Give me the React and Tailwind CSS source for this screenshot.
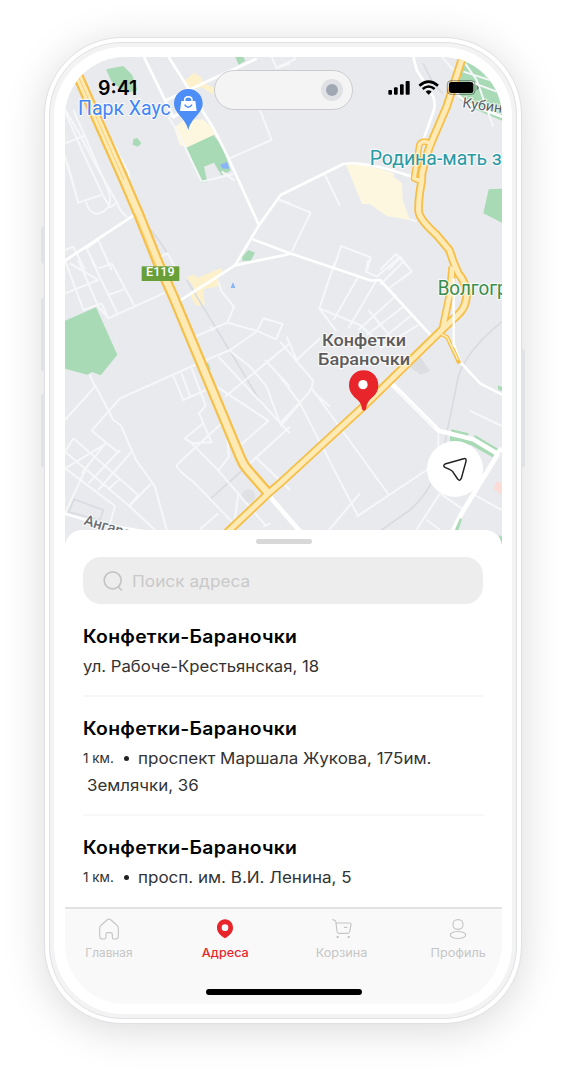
import React from "react";

const highwayA = "M190 130 L235 230 L372 540 L415 640 L475 790 L520 890 L620 1130 L722 1375 Q730 1395 742 1408 L805 1480";
const highwayB =
  "M670 1608 L805 1480 L840 1450 L1090 1220 L1320 995 L1378 940 Q1398 920 1400 885 Q1400 850 1375 820 L1360 785 L1348 750 L1310 705 Q1260 660 1256 635 Q1254 600 1265 545 L1266 520 Q1280 460 1295 425 L1340 320 L1398 140";
const branchLeft = "M1328 985 L1350 880 L1357 800";
const loop = "M1290 430 Q1265 418 1258 435 L1242 535 L1265 545";

function Label({ x, y, size, length, fill, children, ...rest }) {
  return (
    <text
      x={x}
      y={y}
      fontSize={size}
      textLength={length}
      lengthAdjust="spacingAndGlyphs"
      fill={fill}
      stroke="#fff"
      strokeOpacity="0.7"
      strokeWidth="7"
      strokeLinejoin="round"
      paintOrder="stroke"
      {...rest}
    >
      {children}
    </text>
  );
}

function CityMap() {
  return (
    <svg viewBox="195 171 1311 1470" className="block h-[490px] w-[437px] shrink-0" fontFamily="Roboto, sans-serif">
      <rect x="195" y="171" width="1311" height="1470" fill="#e8eaed" />

      {/* parks and built-up areas */}
      <g fill="#a8dab5">
        <path d="M318 208 L370 198 L396 224 L412 270 L380 280 L335 245 Z" />
        <path d="M706 171 L730 171 L736 182 L716 194 Z" />
        <path d="M400 418 L412 414 L424 430 L414 440 L398 434 Z" />
        <path d="M560 442 L574 434 L572 408 L588 406 L592 424 L640 404 L668 440 L692 512 L664 526 L642 488 L612 500 L622 546 L604 548 Z" />
        <path d="M727 770 L745 750 L765 758 L752 782 L727 782 Z" />
        <path d="M195 962 L288 922 L352 1064 L302 1126 L276 1116 L262 1124 L195 1106 Z" />
        <path d="M614 1092 L624 1088 L632 1108 L622 1114 Z" />
        <path d="M1392 171 L1506 171 L1506 362 L1430 330 L1380 300 L1370 240 Z" />
        <path d="M1466 568 L1506 566 L1506 668 L1450 640 Z" />
        <path d="M1354 1288 L1406 1300 L1402 1312 L1354 1300 Z" />
        <path d="M1350 1308 L1420 1318 L1484 1360 L1478 1372 L1414 1336 L1350 1324 Z" />
        <path d="M1424 1304 L1494 1346 L1488 1358 L1420 1322 Z" />
        <path d="M1494 1156 L1506 1162 L1506 1174 L1494 1168 Z" />
      </g>
      <g fill="#fef7e0">
        <path d="M1038 494 L1080 490 L1182 520 L1180 530 L1206 550 L1208 600 L1230 660 L1160 648 L1110 612 L1086 612 Z" />
        <path d="M522 384 L552 360 L610 358 L652 400 L562 442 L540 436 Z" />
      </g>
      <g fill="#fdf1cc">
        <path d="M552 244 L582 218 L604 232 L610 250 L640 262 L640 284 L606 262 L560 270 Z" />
        <path d="M560 830 L584 824 L592 834 L664 804 L668 816 L654 832 L658 858 L640 862 L610 868 L614 914 L588 918 L572 888 L582 864 Z" />
      </g>
      <path d="M660 494 L682 486 L688 506 L668 506 Z" fill="#8ab4f8" />
      <path d="M699 846 L706 864 L692 864 Z" fill="#8ab4f8" />
      <path d="M1490 1444 L1506 1448 L1506 1486 L1480 1466 Z" fill="#fbdcd9" />
      <path d="M1230 1102 L1260 1070 L1290 1112 L1262 1124 Z" fill="#dcdee2" />
      <circle cx="745" cy="1488" r="20" fill="#dfe1e5" />

      {/* rail lines */}
      <g fill="none" stroke="#d9dbe0" strokeWidth="5">
        <path d="M420 650 Q480 720 508 770 M560 840 L700 1070 L790 1220" />
        <path d="M1506 965 Q1400 1050 1375 1130 Q1350 1250 1340 1300 Q1320 1450 1230 1530 L1130 1600" />
        <path d="M630 1498 L730 1408" />
        <path d="M222 1498 L310 1530 L300 1560 L206 1536 Z" />
        <path d="M1270 190 Q1300 260 1330 280" />
      </g>

      {/* minor streets */}
      <g fill="none" stroke="#f6f7f9" strokeWidth="6" strokeLinejoin="round">
        <g transform="translate(90 60)">
          <path d="M105 120 L180 240 L265 400 L298 462 L296 480" />
          <path d="M105 268 L150 345 L200 440 L262 550 Q270 575 292 592" />
          <path d="M105 410 L145 548 L218 524 L160 400 L105 275 M130 270 L235 510 Q255 570 200 582 Q175 578 168 545 M105 370 L168 345 M112 430 L145 548 M218 524 L240 562 L264 546" />
          <path d="M105 690 L130 680 L165 750 M165 690 L205 660 L245 750 M172 690 L200 745 M380 715 L412 700 L440 750" />
          <path d="M515 485 L610 462 M515 485 L440 330 L415 290 M420 290 L470 272 M598 415 L725 360 L690 270 M725 110 L740 145 L780 130" />
          <path d="M745 540 L780 550 M575 455 L615 482" />
        </g>
        <g transform="translate(840 60)">
          <path d="M-5 140 L45 118 L40 105 M0 540 L92 578 L35 695 M135 465 L180 557 M160 750 L183 678 L272 712 L262 750 M300 750 L348 702 L392 750 M325 750 L360 715 M390 598 L410 604 M370 465 L400 470" />
          <path d="M485 110 L520 150 M555 130 L590 180 L640 320 M550 155 L660 190 M570 185 L650 215 M600 120 L620 170" />
        </g>
        <g transform="translate(90 780)">
          <path d="M105 100 L205 60 L120 10 M105 0 L160 150 L215 130 M145 0 L205 140 L235 175 L405 98 M185 0 L262 160 M245 10 L312 135 M205 25 L245 12 M235 105 L282 88 M215 130 L235 175" />
          <path d="M105 480 L195 380 L180 345 M195 375 L250 480 L272 495 L318 600 L375 680 L410 810" />
          <path d="M185 512 L270 415 L528 300 L600 270 L680 215 L700 175 L758 192 L738 238 L680 212 L592 188 L495 230 M592 188 L612 140 L575 95 L565 65 M552 212 L540 200" />
          <path d="M430 348 L460 420 L540 385 M455 340 L480 410 M485 325 L527 437 L507 460 L545 547 L487 550 L465 535 L520 490 M575 490 L440 615 Q440 630 490 665 L620 800" />
          <path d="M185 512 L268 580 M130 535 L325 705 L298 738 L105 575 L130 535 M105 625 L230 550 M155 640 L226 550 M175 670 L270 570 M205 690 L305 575 M238 685 L272 655 M105 625 L255 738 L235 810 M165 632 L105 760 M298 738 L375 810 M298 738 L362 672" />
          <path d="M485 550 L565 632 L710 800 M565 632 L597 590 L592 535 M565 290 L780 520 M560 380 L715 482 L632 555 M600 272 L660 320 L710 380 L750 490 L780 460 M585 410 L780 250 M705 300 L780 380 M675 590 L780 690 M635 632 L780 500 M625 700 L612 800 M510 808 L565 760 M700 800 L720 790" />
        </g>
        <g transform="translate(840 780)">
          <path d="M165 5 L118 145 L170 215 M118 145 L240 195 L300 250 M160 180 L235 50 M205 205 L290 60 M235 210 L350 105 M265 150 L340 240 M260 225 L370 140 M290 250 L395 165 M300 265 L415 195 M265 0 L258 35 L290 50 L360 -10 L395 35 L320 90 M300 75 L370 5" />
          <path d="M0 245 L98 360 Q100 385 80 405 L0 490 M50 300 L120 235 M0 350 L60 430 M0 500 L60 430 L235 770 M95 385 L327 705 M20 230 L50 300 M100 395 L150 440" />
          <path d="M130 830 L240 700 M230 770 L440 630 L475 570 L475 520 M570 452 L665 498 M410 808 L480 700 L545 745 M440 780 L480 810 M575 700 L665 750" />
        </g>
      </g>

      {/* main streets */}
      <g fill="none" stroke="#fff" strokeWidth="8" strokeLinejoin="round">
        <path d="M432 171 L520 352 L540 340 M506 171 L640 384 L688 480 L777 676 M500 300 L770 176" />
        <path d="M195 782 L410 640 M777 676 L705 796 L535 905 M777 676 L842 585 L1030 492 Q1090 480 1242 532 M758 718 L870 760 L1115 842 L1140 840 L1296 1010 M705 796 L870 762" />
        <path d="M1240 171 L1250 210 L1300 290 Q1310 320 1295 350 L1270 420" />
        <path d="M1362 1035 L1380 1085 L1440 1150 L1506 1184" />
        <path d="M195 1541 L290 1570 L470 1600" />
        <path d="M1370 280 L1400 310 L1506 350" />
      </g>
      <path d="M1170 1146 L1316 1292 L1420 1318 L1490 1360 L1506 1345" fill="none" stroke="#fff" strokeWidth="14" />
      <path d="M1494 1362 L1385 1540 L1350 1610 M805 1485 L905 1600" fill="none" stroke="#fff" strokeWidth="14" />
      <path d="M1188 1168 L1305 1284" fill="none" stroke="#e8eaed" strokeWidth="2" />
      <g fill="#a8dab5">
        <path d="M1380 1554 L1386 1558 L1372 1600 L1360 1600 Z" />
        <path d="M1497 1605 L1506 1610 L1506 1641 L1500 1630 Z" />
      </g>

      {/* highways */}
      <g fill="none" strokeLinejoin="round">
        <g stroke="#f6bf4a">
          <path d="M1324 1002 L1342 1012 L1378 1090" strokeWidth="12" />
          <path d={highwayA} strokeWidth="33" />
          <path d={highwayB} strokeWidth="26" />
          <path d={branchLeft} strokeWidth="24" />
          <path d={loop} strokeWidth="20" />
        </g>
        <g stroke="#feeab5">
          <path d="M1324 1002 L1342 1012 L1374 1080" strokeWidth="5" />
          <path d={highwayA} strokeWidth="20" />
          <path d={highwayB} strokeWidth="15" />
          <path d={branchLeft} strokeWidth="14" />
          <path d={loop} strokeWidth="11" />
        </g>
        <path d="M237 234 L372 540 M405 640 L470 800" stroke="#f9cf73" strokeWidth="3" />
        <path d="M1361 835 L1361 1040" stroke="#fff" strokeWidth="7" />
      </g>

      <rect x="425" y="799" width="113" height="44" fill="#689f38" />
      <text x="438" y="828" fontSize="37" fontWeight="500" textLength="86" lengthAdjust="spacingAndGlyphs" fill="#fff">E119</text>

      <Label x="234" y="345" size="59" length="278" fill="#4285f4">Парк Хаус</Label>
      <Label x="1109" y="496" size="60" length="396" fill="#2a9aa5">Родина-мать з</Label>
      <Label x="1313" y="885" size="58" length="210" fill="#388e4c">Волгогр</Label>
      <Label x="1386" y="322" size="43" fill="#5b6066" transform="rotate(8 1386 322)">Кубин</Label>
      <Label x="250" y="1573" size="44" fontWeight="500" fill="#6b6f75" transform="rotate(17 250 1573)">Ангарс</Label>
      <Label x="966" y="1037" size="49" length="252" fontWeight="500" fill="#5d5b5b">Конфетки</Label>
      <Label x="954" y="1094" size="49" length="276" fontWeight="500" fill="#5d5b5b">Бараночки</Label>

      {/* shopping place marker */}
      <path d="M565 267 C541 267 522 286 522 310 C522 342 556 352 565 390 C574 352 608 342 608 310 C608 286 589 267 565 267 Z" fill="#4c8df6" />
      <path d="M544 303 H586 L590 333 H540 Z" fill="#fff" />
      <path d="M554 304 V300 Q554 290 565 290 Q576 290 576 300 V304" fill="none" stroke="#fff" strokeWidth="4.5" />
      <path d="M554 314 Q565 330 576 314" fill="none" stroke="#4c8df6" strokeWidth="4.5" />

      {/* selected shop marker */}
      <path d="M1091 1111 C1066 1111 1047 1130 1047 1156 C1047 1176 1060 1190 1073 1200 Q1084 1209 1086 1228 Q1092 1236 1098 1228 Q1100 1209 1111 1198 C1124 1187 1135 1176 1135 1156 C1135 1130 1116 1111 1091 1111 Z" fill="#e7252a" />
      <circle cx="1089" cy="1154" r="14" fill="#fff" />
    </svg>
  );
}

function StatusBar() {
  return (
    <div className="absolute inset-x-0 top-[13px] flex h-10 items-start">
      <span className="ml-[33px] mt-[4px] w-[116px] font-['Inter',sans-serif] text-[19.5px] font-semibold leading-[29px] text-black">9:41</span>
      <div className="flex h-10 w-[139px] items-center justify-end rounded-full border border-[#cbcccf] bg-[#f4f4f4] pr-[9px]">
        <span className="flex size-[22px] items-center justify-center rounded-full bg-[#dfe1e5]">
          <span className="size-3 rounded-full bg-[#a0a8b4]" />
        </span>
      </div>
      <svg viewBox="325 180 275 46" className="ml-[35px] mt-[10px] h-[15.33px] w-[91.67px]">
        <rect x="326" y="210" width="11" height="14" rx="3" />
        <rect x="343" y="202" width="11" height="22" rx="3" />
        <rect x="361" y="193" width="11" height="31" rx="3" />
        <rect x="378" y="183" width="12" height="41" rx="3" />
        <path d="M419 197 Q447 173 475 197" fill="none" stroke="#000" strokeWidth="8" />
        <path d="M429 207 Q447 192 465 207" fill="none" stroke="#000" strokeWidth="7.5" />
        <path d="M438 215 Q447 207 456 215 L447 224 Z" />
        <rect x="503" y="182" width="83" height="41" rx="11" fill="none" stroke="#000" strokeOpacity=".4" strokeWidth="3" />
        <rect x="508" y="186" width="73" height="33" rx="7" />
        <path d="M591 195 Q598 200 598 203 Q598 206 591 211 Z" fillOpacity=".4" />
      </svg>
    </div>
  );
}

function Shop({ address, distance, last }) {
  return (
    <li className={last ? "pt-[18px]" : "border-b-2 border-[#f8f8f8] pb-[15px] pt-[18px]"}>
      <h2 className="origin-left scale-x-[1.075] whitespace-nowrap text-[18px] font-semibold leading-[27px] tracking-[0.25px] text-black">
        Конфетки-Бараночки
      </h2>
      <p className="mt-[3px] flex text-[16px] leading-[27px] text-[#333]">
        {distance && (
          <>
            <span className="w-[41px] text-[13.5px]">{distance}</span>
            <span className="mt-[11px] mr-[9px] size-[5px] shrink-0 rounded-full bg-[#222]" />
          </>
        )}
        <span className={"origin-left whitespace-nowrap " + (distance ? "scale-x-[1.062]" : "scale-x-[1.044]")}>{address[0]}</span>
      </p>
      {address[1] && (
        <p className="pl-[4px] text-[16px] leading-[27px] text-[#333]">
          <span className="inline-block origin-left scale-x-[1.055]">{address[1]}</span>
        </p>
      )}
    </li>
  );
}

function Tab({ label, active, children }) {
  return (
    <a className={"flex w-[70px] flex-col items-center text-[11.5px] leading-[16px] " + (active ? "font-medium text-[#e7252a]" : "text-[#c6c6c6]")}>
      <svg viewBox="0 0 72 72" className="size-6" fill="none" stroke="currentColor" strokeWidth="3.5" strokeLinecap="round" strokeLinejoin="round">
        {children}
      </svg>
      <span className={"mt-[4px] " + (label === "Главная" ? "scale-x-[1.03]" : "scale-x-110")}>{label}</span>
    </a>
  );
}

export default function App() {
  return (
    <div className="relative h-[1070px] w-[566px] overflow-hidden bg-white pl-[44px] pt-[37px] font-['Inter',sans-serif]">
      <i className="absolute left-[41px] top-[226px] h-[38px] w-[4px] rounded-l bg-[#e1e2e6]" />
      <i className="absolute left-[41px] top-[297px] h-[75px] w-[4px] rounded-l bg-[#e1e2e6]" />
      <i className="absolute left-[41px] top-[393px] h-[75px] w-[4px] rounded-l bg-[#e1e2e6]" />
      <i className="absolute left-[521px] top-[349px] h-[119px] w-[4px] rounded-r bg-[#e1e2e6]" />
      <div className="h-[987px] w-[478px] rounded-[78px] border border-[#e0e1e5] bg-white p-[4px] shadow-[0_6px_42px_rgba(0,0,0,0.15)]">
        <div className="h-full rounded-[73px] border border-[#e0e1e5] bg-[#f3f3f4] p-[4px]">
          <div className="flex h-full flex-col rounded-[69px] bg-white px-[11px] py-[10px]">
            <main className="relative flex h-[947px] w-[437px] shrink-0 flex-col overflow-hidden rounded-[60px] bg-white">
              <CityMap />
              <StatusBar />
              <button className="absolute left-[362px] top-[384px] flex size-14 items-center justify-center rounded-full bg-white">
                <svg viewBox="485 585 80 84" className="h-7 w-[26.67px]" fill="none" stroke="#222" strokeWidth="4.5" strokeLinejoin="round">
                  <path d="M494 612 L550 596 Q559 594 557 604 L543 655 Q539 665 532 657 L517 635 Q514 631 509 629 L494 622 Q487 617 494 612 Z" />
                </svg>
              </button>
              <section className="relative -mt-[17px] flex flex-1 flex-col rounded-t-[17px] bg-white px-[18px]">
                <div className="mx-auto mt-[9px] h-[5px] w-[56px] rounded-full bg-[#d8d8d8]" />
                <label className="mt-[13px] flex h-[47px] w-[400px] items-center rounded-[18px] bg-[#ededed] pl-[20px] pt-px">
                  <svg viewBox="0 0 60 60" className="size-5" fill="none" stroke="#c5c5c5" strokeWidth="5" strokeLinecap="round">
                    <circle cx="29" cy="28" r="25.5" />
                    <path d="M45 47 L55 57" />
                  </svg>
                  <span className="ml-[9px] origin-left scale-x-[1.045] text-[16.5px] text-[#c9c9c9]">Поиск адреса</span>
                </label>
                <ul className="w-[401px] pt-px">
                  <Shop address={["ул. Рабоче-Крестьянская, 18"]} />
                  <Shop distance="1 км." address={["проспект Маршала Жукова, 175им.", "Землячки, 36"]} />
                  <Shop distance="1 км." address={["просп. им. В.И. Ленина, 5"]} last />
                </ul>
              </section>
              <nav className="flex h-[97px] shrink-0 flex-col border-t-2 border-[#e2e2e2] bg-[#f9f9f9] pt-[8px]">
                <div className="flex justify-between px-[9px]">
                  <Tab label="Главная">
                    <path d="M8 34 Q8 28 13 24 L30 9 Q36 4 42 9 L59 24 Q64 28 64 34 V56 Q64 66 55 66 H50 Q46 66 46 61 V52 Q46 47 41 47 H32 Q27 47 27 52 V61 Q27 66 22 66 H18 Q8 66 8 56 Z" />
                  </Tab>
                  <Tab label="Адреса" active>
                    <path fill="currentColor" stroke="none" fillRule="evenodd" d="M36 7 C22 7 12 18 12 32 C12 47 22 53 31 61 Q36 66 41 61 C50 53 60 47 60 32 C60 18 50 7 36 7 Z M36 22 A10 10 0 1 1 36 42 A10 10 0 1 1 36 22 Z" />
                  </Tab>
                  <Tab label="Корзина">
                    <path d="M8 8 L14 10 Q17 12 18 17 L21 44 Q22 49 27 49 H52 Q58 49 59 44 L63 23 Q64 18 58 18 H18 M43 31 H51" />
                    <path d="M22 60 H24 M55 60 H57" strokeWidth="6" />
                  </Tab>
                  <Tab label="Профиль">
                    <rect x="21" y="8" width="30" height="29" rx="14" />
                    <ellipse cx="36" cy="54" rx="23" ry="10.5" />
                  </Tab>
                </div>
                <div className="mx-auto mt-[28px] h-[6px] w-[156px] rounded-full bg-black" />
              </nav>
            </main>
          </div>
        </div>
      </div>
    </div>
  );
}
